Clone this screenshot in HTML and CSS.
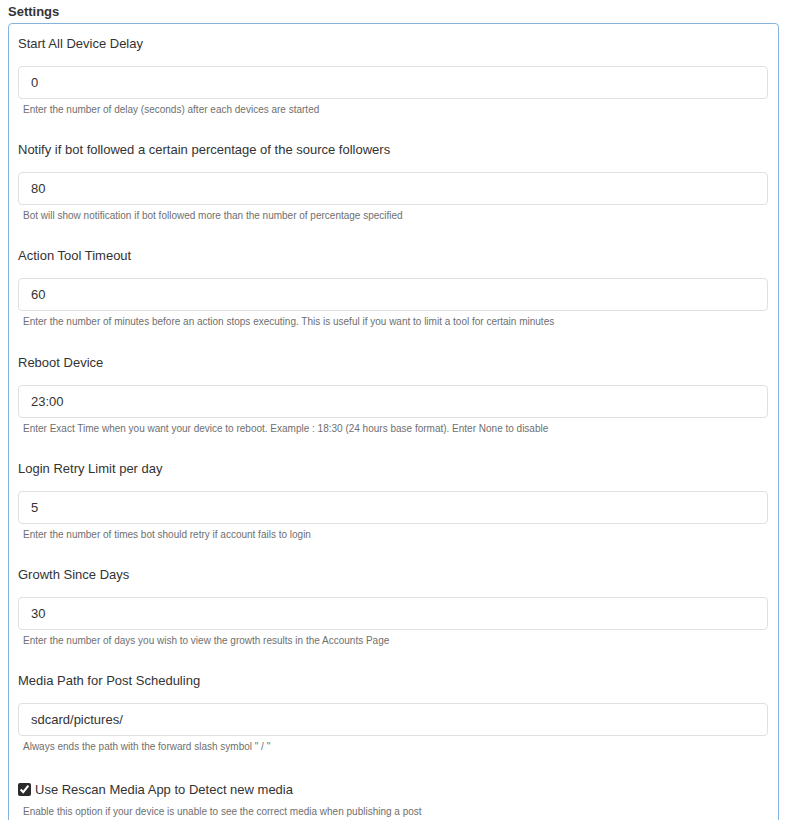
FILE: index.html
```html
<!DOCTYPE html>
<html lang="en">
<head>
  <meta charset="UTF-8" />
  <meta name="viewport" content="width=device-width, initial-scale=1.0"/>
  <title>Settings</title>
  <link rel="stylesheet" href="styles.css">
</head>
<body>
  <h4 class="title">Settings</h4>

  <!-- Painel de configurações -->
  <form class="panel">
    <div class="group">
      <label for="startDelay">Start All Device Delay</label>
      <input type="text" id="startDelay" value="0">
      <p class="help">Enter the number of delay (seconds) after each devices are started</p>
    </div>

    <div class="group">
      <label for="notifyPercent">Notify if bot followed a certain percentage of the source followers</label>
      <input type="text" id="notifyPercent" value="80">
      <p class="help">Bot will show notification if bot followed more than the number of percentage specified</p>
    </div>

    <div class="group">
      <label for="toolTimeout">Action Tool Timeout</label>
      <input type="text" id="toolTimeout" value="60">
      <p class="help">Enter the number of minutes before an action stops executing. This is useful if you want to limit a tool for certain minutes</p>
    </div>

    <div class="group">
      <label for="rebootTime">Reboot Device</label>
      <input type="text" id="rebootTime" value="23:00">
      <p class="help">Enter Exact Time when you want your device to reboot. Example : 18:30 (24 hours base format). Enter None to disable</p>
    </div>

    <div class="group">
      <label for="loginRetry">Login Retry Limit per day</label>
      <input type="text" id="loginRetry" value="5">
      <p class="help">Enter the number of times bot should retry if account fails to login</p>
    </div>

    <div class="group">
      <label for="growthDays">Growth Since Days</label>
      <input type="text" id="growthDays" value="30">
      <p class="help">Enter the number of days you wish to view the growth results in the Accounts Page</p>
    </div>

    <div class="group">
      <label for="mediaPath">Media Path for Post Scheduling</label>
      <input type="text" id="mediaPath" value="sdcard/pictures/">
      <p class="help">Always ends the path with the forward slash symbol " / "</p>
    </div>

    <div class="group check">
      <label for="rescanMedia"><input type="checkbox" id="rescanMedia" checked> Use Rescan Media App to Detect new media</label>
      <p class="help">Enable this option if your device is unable to see the correct media when publishing a post</p>
    </div>
  </form>
</body>
</html>
```

FILE: styles.css
```css
/* Reset básico */
* {
  margin: 0;
  padding: 0;
  box-sizing: border-box;
}

body {
  margin: 0 9px 0 8px;
  font-family: "Liberation Sans", Arial, sans-serif;
  color: #333;
  background: #fff;
}

.title {
  font-size: 13px;
  font-weight: bold;
  line-height: 23px;
  color: #333;
}

.panel {
  border: 1px solid #84b4de;
  border-radius: 4px;
  padding: 9px 10px 0 9px;
}

.group {
  margin-bottom: 22.2px;
}

.group label {
  display: block;
  font-size: 13px;
  line-height: 21px;
  margin-bottom: 12px;
  color: #333;
}

.group input[type="text"] {
  display: block;
  width: 100%;
  height: 33px;
  padding: 0 12px;
  font-family: inherit;
  font-size: 13px;
  color: #333;
  border: 1px solid #e0e0e0;
  border-radius: 4px;
  background: #fff;
}

.help {
  margin-top: 4px;
  padding-left: 5px;
  font-size: 10px;
  line-height: 14px;
  color: #6f6f6f;
}

/* Linha com checkbox */
.check {
  padding-top: 3px;
}

.check label {
  display: flex;
  align-items: center;
  gap: 4px;
  margin-bottom: 5px;
  font-size: 13px;
}

.check input[type="checkbox"] {
  width: 13px;
  height: 13px;
  accent-color: #2b2b2b;
}
```
